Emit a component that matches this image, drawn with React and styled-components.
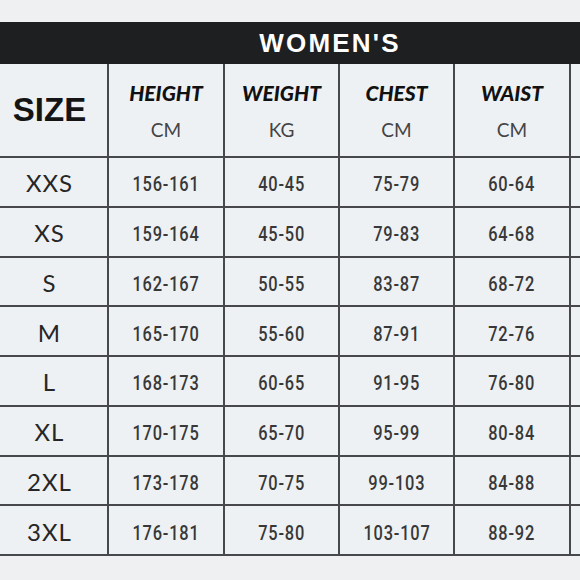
import React from "react";
import styled, { createGlobalStyle } from "styled-components";

const GlobalStyle = createGlobalStyle`
  html, body {
    margin: 0;
    padding: 0;
    background: #f3f4f6;
  }
  * {
    box-sizing: border-box;
  }
`;

const columns = [
  { label: "HEIGHT", unit: "CM" },
  { label: "WEIGHT", unit: "KG" },
  { label: "CHEST", unit: "CM" },
  { label: "WAIST", unit: "CM" },
];

const rows = [
  { size: "XXS", values: ["156-161", "40-45", "75-79", "60-64"] },
  { size: "XS", values: ["159-164", "45-50", "79-83", "64-68"] },
  { size: "S", values: ["162-167", "50-55", "83-87", "68-72"] },
  { size: "M", values: ["165-170", "55-60", "87-91", "72-76"] },
  { size: "L", values: ["168-173", "60-65", "91-95", "76-80"] },
  { size: "XL", values: ["170-175", "65-70", "95-99", "80-84"] },
  { size: "2XL", values: ["173-178", "70-75", "99-103", "84-88"] },
  { size: "3XL", values: ["176-181", "75-80", "103-107", "88-92"] },
];

const Page = styled.div`
  width: 580px;
  height: 580px;
  overflow: hidden;
  padding-top: 22px;
  background: #eef0f2;
`;

const TitleBar = styled.div`
  height: 42px;
  background: #1d1f21;
  display: flex;
  align-items: center;
  justify-content: center;
  padding-left: 80px;
`;

const Title = styled.h1`
  margin: 0;
  color: #ffffff;
  font-family: "Liberation Sans", Arial, sans-serif;
  font-weight: 700;
  font-size: 26px;
  letter-spacing: 2.2px;
`;

const Table = styled.div`
  display: grid;
  grid-template-columns: 107px 114px 113px 113px 114px 1fr;
  grid-template-rows: 92px repeat(8, 47.75px);
  gap: 2px;
  background: #46484b;
  border-bottom: 2px solid #46484b;
`;

const Cell = styled.div`
  background: #eef1f4;
  display: flex;
  flex-direction: column;
  align-items: center;
  justify-content: center;
  padding-right: ${({ shift }) => (shift ? `${shift}px` : "0")};
`;

const SizeHead = styled.span`
  font-family: "Liberation Sans", Arial, sans-serif;
  font-weight: 700;
  font-size: 33px;
  color: #141414;
`;

const ColLabel = styled.span`
  font-family: Lato, "Open Sans", sans-serif;
  font-weight: 900;
  font-style: italic;
  font-size: 21px;
  color: #111;
  line-height: 1;
`;

const ColUnit = styled.span`
  font-family: Lato, "Open Sans", sans-serif;
  font-size: 19px;
  color: #444;
  line-height: 1;
  margin-top: 17px;
`;

const SizeLabel = styled.span`
  font-family: Lato, "Open Sans", sans-serif;
  font-size: 24px;
  letter-spacing: 1px;
  color: #262626;
  margin-top: 2px;
`;

const Value = styled.span`
  display: inline-block;
  font-family: Roboto, "DejaVu Sans", sans-serif;
  font-weight: 500;
  font-size: 20px;
  color: #383838;
  letter-spacing: 1px;
  margin-top: 5px;
  transform: scaleX(0.82);
`;

export default function App() {
  return (
    <Page>
      <GlobalStyle />
      <TitleBar>
        <Title>WOMEN'S</Title>
      </TitleBar>
      <Table>
        <Cell shift={8}>
          <SizeHead>SIZE</SizeHead>
        </Cell>
        {columns.map((c) => (
          <Cell key={c.label}>
            <ColLabel>{c.label}</ColLabel>
            <ColUnit>{c.unit}</ColUnit>
          </Cell>
        ))}
        <Cell />
        {rows.map((r) => (
          <React.Fragment key={r.size}>
            <Cell shift={8}>
              <SizeLabel>{r.size}</SizeLabel>
            </Cell>
            {r.values.map((v, i) => (
              <Cell key={i}>
                <Value>{v}</Value>
              </Cell>
            ))}
            <Cell />
          </React.Fragment>
        ))}
      </Table>
    </Page>
  );
}
